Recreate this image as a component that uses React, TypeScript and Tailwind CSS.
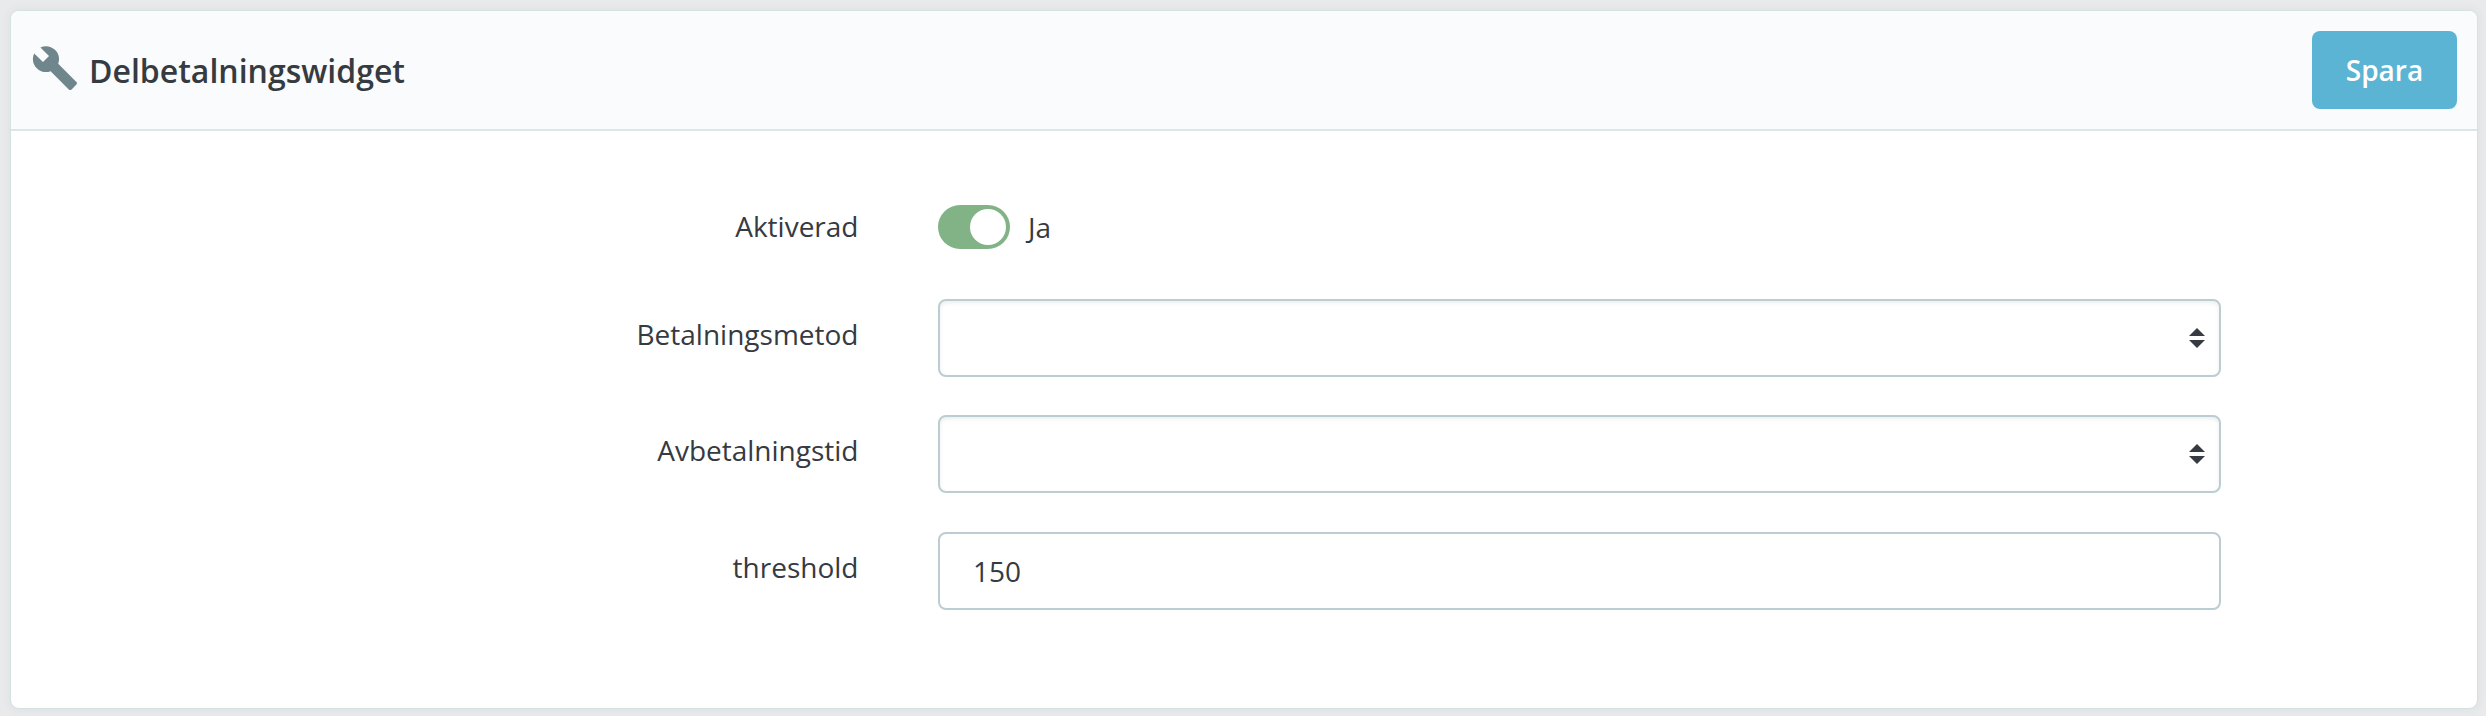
import type { ReactNode } from "react";
import { MdBuild } from "react-icons/md";

function SortArrows() {
  return (
    <svg width="16" height="20" viewBox="0 0 16 20" fill="#363a41" aria-hidden="true">
      <path d="M8 0l8 8H0zM0 12h16l-8 8z" />
    </svg>
  );
}

function Row({ label, children }: { label: string; children: ReactNode }) {
  return (
    <div className="flex h-[78px] items-start">
      <div className="w-[847.5px] pt-4 text-right text-[28px] leading-[38px]">{label}</div>
      <div className="ml-[79.5px] w-[1283px]">{children}</div>
    </div>
  );
}

function Select({ label }: { label: string }) {
  return (
    <button
      type="button"
      aria-label={label}
      className="flex h-[78px] w-full items-center justify-end rounded-lg border-2 border-[#bbcdd2] bg-white pr-[14px] shadow-[inset_0_2px_4px_rgba(0,0,0,0.075)]"
    >
      <SortArrows />
    </button>
  );
}

export default function App() {
  return (
    <div className="h-[716px] overflow-hidden bg-[#e9eaeb] p-[11px] pr-[9px] font-['Open_Sans',sans-serif] text-[#363a41]">
      <section className="h-[697px] overflow-hidden rounded-lg bg-white shadow-[0_0_8px_4px_rgba(0,0,0,0.03),0_0_0_1px_#dbe6e9]">
        <header className="flex h-[120px] items-center justify-between border-b-2 border-[#dbe6e9] bg-[#fafbfc] pr-5 pl-5">
          <div className="flex items-center">
            <MdBuild className="mb-1 size-12 text-[#70868d]" />
            <h1 className="mt-[2px] ml-[10px] text-[32px] leading-[44px] font-semibold">Delbetalningswidget</h1>
          </div>
          <button type="button" className="h-[78px] w-[145px] rounded-lg bg-[#5bb4d3] text-[28px] font-semibold text-white">
            Spara
          </button>
        </header>
        <div className="flex flex-col pt-[60px]">
          <div className="flex h-[108px] items-start">
            <div className="w-[847.5px] pt-4 text-right text-[28px] leading-[38px]">Aktiverad</div>
            <div className="ml-[79.5px] flex items-center pt-[14px]">
              <button
                type="button"
                role="switch"
                aria-checked="true"
                aria-label="Aktiverad"
                className="flex h-11 w-[72px] items-center justify-end rounded-full bg-[#82b387] pr-1"
              >
                <span className="size-9 rounded-full bg-white" />
              </button>
              <span className="ml-[18px] text-[28px] leading-[38px]">Ja</span>
            </div>
          </div>
          <div className="flex flex-col">
            <Row label="Betalningsmetod">
              <Select label="Betalningsmetod" />
            </Row>
            <div className="mt-[38px] mb-[39px]">
              <Row label="Avbetalningstid">
                <Select label="Avbetalningstid" />
              </Row>
            </div>
            <Row label="threshold">
              <input
                aria-label="threshold"
                defaultValue="150"
                className="h-[78px] w-full rounded-lg border-2 border-[#bbcdd2] bg-white px-[33px] text-[28px]"
              />
            </Row>
          </div>
        </div>
      </section>
    </div>
  );
}
